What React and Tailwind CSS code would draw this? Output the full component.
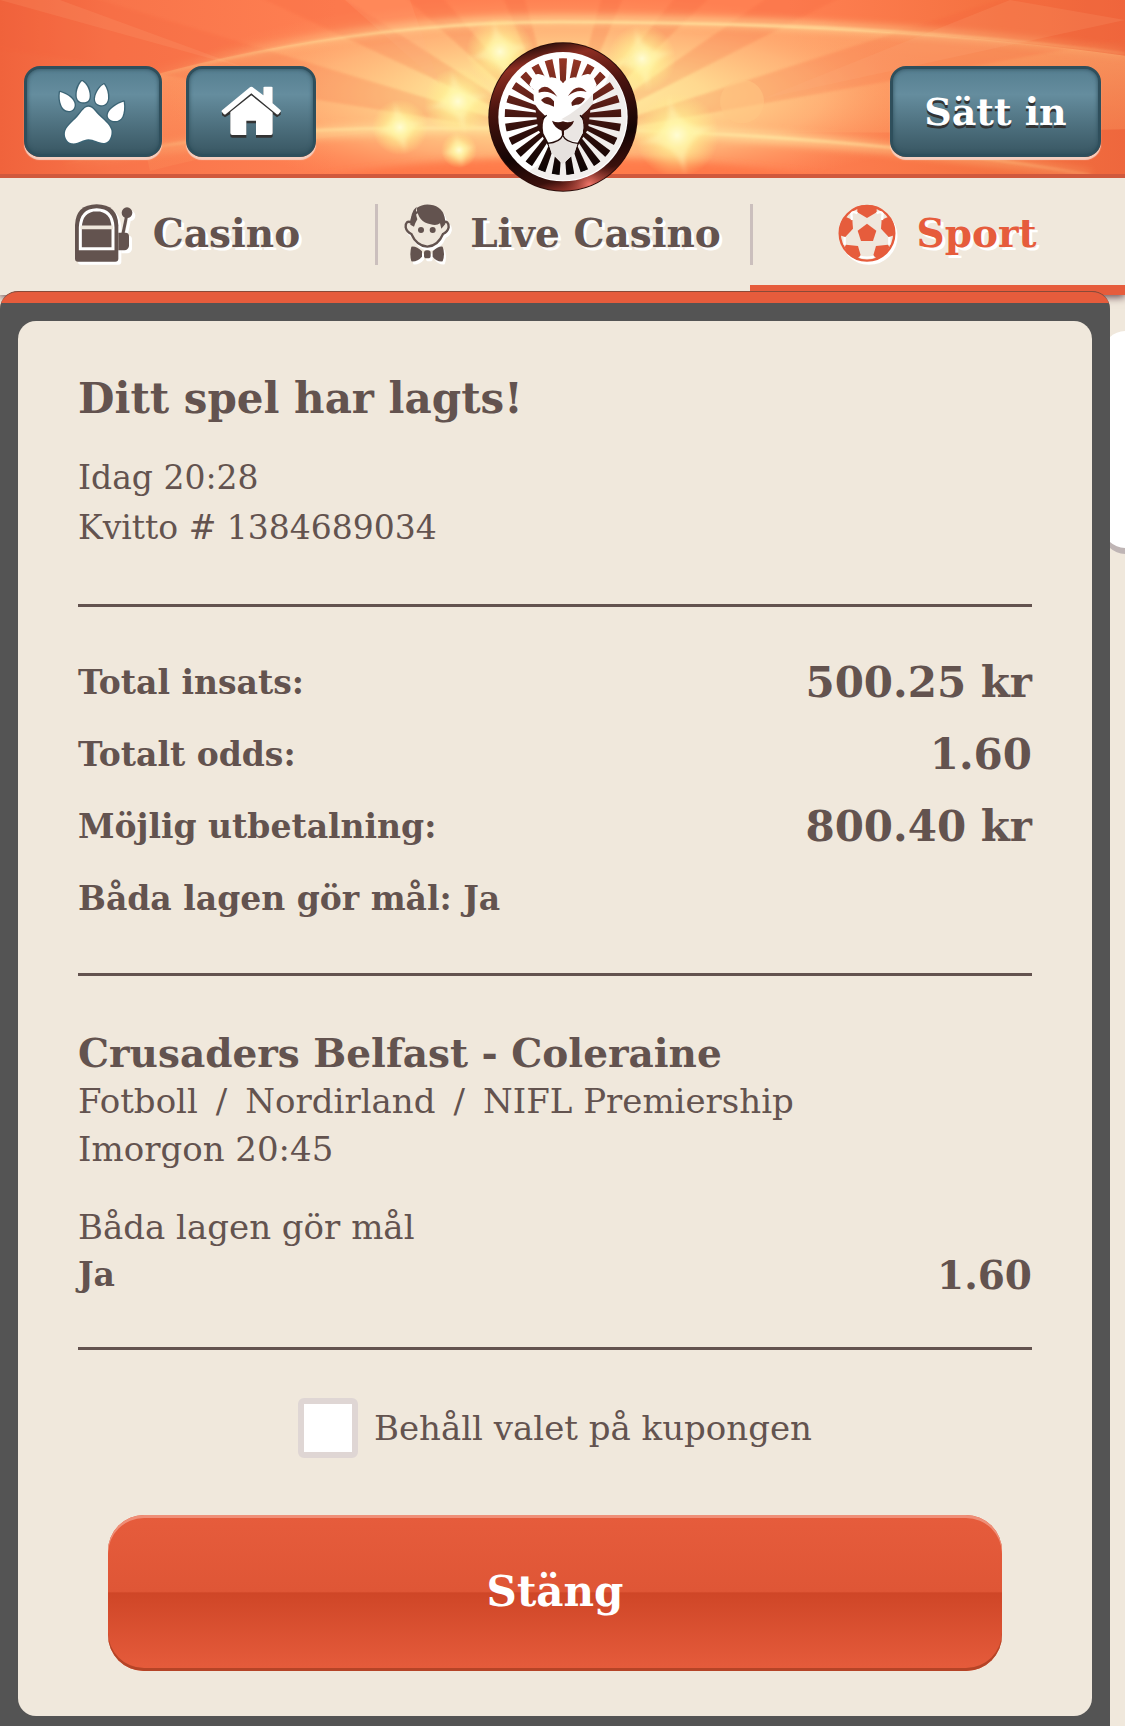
import React, { useState } from 'react';

const TOTALS = [
  { label: 'Total insats:', value: '500.25 kr' },
  { label: 'Totalt odds:', value: '1.60' },
  { label: 'Möjlig utbetalning:', value: '800.40 kr' },
  { label: 'Båda lagen gör mål: Ja', value: '' },
];

const SPARKS = [[458, 102, 34], [642, 59, 34], [677, 136, 42], [500, 52, 34], [459, 151, 18], [400, 128, 28]];
const RAYS = [-77, -61, -44, -19, 19, 42, 59, 76];
const SPOKES = Array.from({ length: 25 }, (_, i) => i * 14.4);

function HeaderRays() {
  return (
    <svg className="absolute inset-0 h-full w-full" viewBox="0 0 1125 175" preserveAspectRatio="none" aria-hidden="true">
      <defs>
        <linearGradient id="base" x2="1">
          <stop offset="0" stopColor="#f0633c" />
          <stop offset=".1" stopColor="#f8744a" />
          <stop offset=".3" stopColor="#ff8052" />
          <stop offset=".7" stopColor="#ff8052" />
          <stop offset=".9" stopColor="#f4703f" />
          <stop offset="1" stopColor="#ee673d" />
        </linearGradient>
        <radialGradient id="glow">
          <stop offset="0" stopColor="#fff3a6" />
          <stop offset=".35" stopColor="#ffdc92" stopOpacity=".95" />
          <stop offset=".65" stopColor="#ffbc7e" stopOpacity=".75" />
          <stop offset="1" stopColor="#ff9760" stopOpacity="0" />
        </radialGradient>
        <radialGradient id="spark">
          <stop offset="0" stopColor="#fffde0" />
          <stop offset=".3" stopColor="#fff79a" stopOpacity=".8" />
          <stop offset="1" stopColor="#fff08a" stopOpacity="0" />
        </radialGradient>
        <linearGradient id="arc" x2="1">
          <stop offset="0" stopColor="#ffe09a" stopOpacity="0" />
          <stop offset=".35" stopColor="#ffe6a0" />
          <stop offset=".7" stopColor="#ffe6a0" />
          <stop offset="1" stopColor="#ffc080" stopOpacity=".3" />
        </linearGradient>
        <linearGradient id="dome" x2="0" y2="1">
          <stop offset="0" stopColor="#ffc080" stopOpacity=".6" />
          <stop offset="1" stopColor="#ffa468" stopOpacity=".15" />
        </linearGradient>
        <filter id="soft" x="-10%" y="-50%" width="120%" height="200%"><feGaussianBlur stdDeviation="4" /></filter>
        <filter id="thin" x="-10%" y="-50%" width="120%" height="200%"><feGaussianBlur stdDeviation="1" /></filter>
        <filter id="haze" x="-30%" y="-30%" width="160%" height="160%"><feGaussianBlur stdDeviation="2" /></filter>
      </defs>
      <rect width="1125" height="175" fill="url(#base)" />
      <path d="M130 82Q340 22 560 22Q880 22 1125 56V130Q800 138 560 126Q330 124 150 172Z" fill="url(#dome)" />
      <ellipse cx="565" cy="96" rx="400" ry="100" fill="url(#glow)" />
      {RAYS.map((angle) => (
        <path key={angle} d="M563 140L500 -800H626Z" transform={`rotate(${angle} 563 140)`} fill="#f4603a" opacity=".2" filter="url(#thin)" />
      ))}
      <path d="M345 0L440 85L410 0ZM0 0L250 70L60 0ZM1125 20L760 100L1010 0Z" fill="#ffb888" opacity=".15" />
      <g fill="none" stroke="url(#arc)">
        <path d="M120 85Q340 20 560 20Q880 20 1125 54" strokeWidth="10" opacity=".5" filter="url(#soft)" />
        <path d="M120 86Q340 22 560 22Q880 22 1125 54" strokeWidth="3" opacity=".7" filter="url(#thin)" />
        <path d="M60 166Q260 126 560 126Q860 138 1090 176" strokeWidth="12" opacity=".6" filter="url(#soft)" />
        <path d="M60 166Q220 129 400 129H560Q860 135 1090 176" strokeWidth="3" opacity=".7" filter="url(#thin)" />
      </g>
      <path d="M300 182Q560 134 850 182Z" fill="#ff7444" opacity=".8" filter="url(#soft)" />
      <circle cx="742" cy="102" r="22" fill="#ffc784" opacity=".5" />
      {SPARKS.map(([x, y, r]) => (
        <g key={x} transform={`translate(${x} ${y})`}>
          <circle r={r} fill="url(#spark)" />
          <path d={`M0 ${-r}Q1 -1 ${r} 0Q1 1 0 ${r}Q-1 1 ${-r} 0Q-1 -1 0 ${-r}Z`} fill="#fffbc0" opacity=".4" transform="rotate(-12)" filter="url(#haze)" />
        </g>
      ))}
    </svg>
  );
}

function LionLogo() {
  return (
    <svg className="h-[150px] w-[150px]" viewBox="24 38 450 450" aria-hidden="true">
      <defs>
        <linearGradient id="rim" x1=".35" y1="0" x2=".6" y2="1">
          <stop offset="0" stopColor="#250d0a" />
          <stop offset=".12" stopColor="#8d2e22" />
          <stop offset=".35" stopColor="#4b140f" />
          <stop offset=".7" stopColor="#140504" />
          <stop offset=".9" stopColor="#3a100c" />
          <stop offset="1" stopColor="#a63c31" />
        </linearGradient>
        <radialGradient id="rimShine" cx=".68" cy=".96" r=".2">
          <stop offset="0" stopColor="#f0766a" />
          <stop offset="1" stopColor="#7e2a20" stopOpacity="0" />
        </radialGradient>
        <linearGradient id="mane" gradientUnits="userSpaceOnUse" x1="249" y1="88" x2="249" y2="437">
          <stop offset="0" stopColor="#963625" />
          <stop offset=".3" stopColor="#67231a" />
          <stop offset=".6" stopColor="#33100c" />
          <stop offset="1" stopColor="#090303" />
        </linearGradient>
        <clipPath id="disc"><circle cx="249" cy="262" r="175" /></clipPath>
      </defs>
      <circle cx="249" cy="263" r="224" fill="#2a0c09" />
      <circle cx="249" cy="263" r="221" fill="url(#rim)" />
      <circle cx="249" cy="263" r="221" fill="url(#rimShine)" />
      <circle cx="249" cy="262" r="194" fill="#fff" />
      <path d="M390 132A192 192 0 0 1 148 425Q310 330 390 132Z" fill="#f1eeec" />
      <mask id="spokes">
        {SPOKES.map((angle) => (
          <path key={angle} d="M237 86H261L252 262H246Z" transform={`rotate(${angle} 249 262)`} fill="#fff" />
        ))}
        <path d="M166 185L166 235L174 300L208 355L248 400L290 355L324 300L332 235L332 185L249 150Z" fill="#fff" />
      </mask>
      <g clipPath="url(#disc)">
        <rect x="50" y="70" width="400" height="390" fill="url(#mane)" mask="url(#spokes)" />
      </g>
      <path d="M249 162Q240 146 215 144Q200 148 190 138L176 134Q166 132 158 144L148 166Q152 176 160 180L162 222Q176 244 196 260Q184 282 190 312L205 340L215 372L248 405L283 372L293 340L308 312Q314 282 302 260Q322 244 338 222L340 180Q348 176 350 166L340 144Q332 132 322 134L308 138Q298 148 283 144Q258 146 249 162Z" fill="#fff" />
      <path d="M338 195L340 222Q322 244 302 260Q314 282 308 312L292 334Q262 342 248 320L266 275L244 270Q300 240 338 195Z" fill="#eae6e3" />
      <path d="M205 342Q235 330 248 320Q262 334 293 342L283 372L248 405L215 372Z" fill="#e6e1de" />
      <g fill="url(#mane)">
        <path d="M176 182Q200 156 232 202Q204 180 176 190Z" />
        <path d="M183 212Q203 192 222 216L222 232L208 226Q192 224 183 212Z" />
        <path d="M264 200Q292 156 320 188Q292 178 264 200Z" />
        <path d="M274 220Q290 194 315 208Q306 226 288 226L276 230Z" />
        <path d="M216 274Q232 282 249 276Q266 282 282 274Q278 292 252 304L252 318H246L245 304Q222 294 216 274Z" />
      </g>
      <path d="M202 342Q240 340 248 318Q258 340 294 342M200 258L188 268M300 258L310 268" fill="none" stroke="#210a08" strokeWidth="4" />
    </svg>
  );
}

function PawIcon() {
  return (
    <svg className="h-16 w-[72px]" viewBox="0 0 216 192" aria-hidden="true">
      <g fill="#fff" stroke="#3b6475" strokeWidth="8" paintOrder="stroke" strokeLinejoin="round">
        <path d="M75 3C86 10 98 26 98 48C98 62 90 67 79 67C68 67 60 61 59 48C58 30 66 12 75 3Z" />
        <path d="M141 13C150 26 154 40 153 56C151 70 143 76 132 76C120 75 113 67 114 55C116 38 128 20 141 13Z" />
        <path d="M9 36C28 42 46 52 52 68C56 82 48 92 38 93C26 94 17 86 13 76C8 64 7 50 9 36Z" />
        <path d="M200 65C203 82 201 98 196 110C190 121 178 126 166 122C155 118 149 110 154 98C160 84 182 70 200 65Z" />
        <path d="M94 80C107 80 112 92 124 104C138 118 158 132 163 150C166 166 158 188 142 189C124 190 112 178 94 178C78 178 66 192 44 190C28 186 20 168 25 152C32 134 54 120 66 104C76 92 82 81 94 80Z" />
      </g>
    </svg>
  );
}

function HomeIcon() {
  return (
    <svg className="h-[52px] w-[60px]" viewBox="0 0 180 156" aria-hidden="true">
      <path d="M91 6L3 78V88L12 94L28 84V150Q28 155 34 155H76V112H105V155H150Q155 155 155 150V84L168 94L179 86V78L155 57V6H127V30Z" fill="#333" />
      <path d="M91 22L28 74V141Q28 147 34 147H76V104H105V147H150Q155 147 155 141V74Z" fill="#fff" />
      <path d="M11 86L91 22L170 86" fill="none" stroke="#333" strokeWidth="9" />
      <path d="M91 2Q94 2 98 6L127 28V6Q127 2 131 2H151Q155 2 155 6V52L178 72Q181 75 178 78L173 84Q170 87 166 84L91 22L15 84Q12 87 8 84L3 78Q0 75 4 72L84 6Q88 2 91 2Z" fill="#fff" />
    </svg>
  );
}

function SlotIcon() {
  return (
    <svg className="h-[60px] w-[60px] [filter:drop-shadow(3px_3px_0_#fff)]" viewBox="0 0 180 180" aria-hidden="true">
      <path d="M0 64Q2 2 65 1Q128 2 130 64V164Q130 173 121 173H9Q0 173 0 164Z" fill="#63534f" />
      <path d="M16 134V70Q18 18 65 17Q112 18 114 70V134Z" fill="#63534f" stroke="#fff" strokeWidth="9" />
      <path d="M16 70H114" stroke="#efe7dc" strokeWidth="11" />
      <path d="M130 86H152Q162 86 162 98V126Q160 138 148 139H130Z" fill="#63534f" />
      <path d="M144 88L156 30" stroke="#63534f" strokeWidth="9" />
      <circle cx="156" cy="26" r="16" fill="#63534f" />
    </svg>
  );
}

function DealerIcon() {
  return (
    <svg className="h-[60px] w-[48px] [filter:drop-shadow(2px_3px_0_#fff)]" viewBox="0 0 144 180" aria-hidden="true">
      <path d="M22 55Q4 48 5 70Q8 84 22 90Q38 126 70 128Q102 126 117 90Q131 84 134 70Q134 48 117 55Q115 20 70 16Q24 20 22 55Z" fill="#efe7dc" stroke="#63534f" strokeWidth="7" />
      <path d="M38 8Q20 22 19 62L30 68Q34 56 40 46Q33 26 38 8Z" fill="#63534f" />
      <path d="M38 12Q60 -4 88 4Q124 14 124 60L112 74L108 58Q98 66 80 61Q42 54 38 12Z" fill="#63534f" />
      <circle cx="51" cy="78" r="9" fill="#63534f" />
      <circle cx="86" cy="78" r="9" fill="#63534f" />
      <path d="M22 128Q38 126 54 142V158Q40 174 22 172Q16 150 22 128ZM116 128Q102 126 86 142V158Q98 174 116 172Q124 150 116 128Z" fill="#63534f" />
      <rect x="60" y="139" width="20" height="24" rx="8" fill="#63534f" />
    </svg>
  );
}

function BallIcon() {
  return (
    <svg className="h-[60px] w-[60px] [filter:drop-shadow(2px_3px_0_#fff)]" viewBox="0 0 180 180" aria-hidden="true">
      <circle cx="87" cy="88" r="82" fill="#efe7dc" stroke="#e65c3c" strokeWidth="7" />
      <g fill="#e65c3c">
        <path d="M87 59L115 80L105 111H69L59 80Z" />
        <path d="M58 8Q87 -2 116 8V25L87 42L58 25Z" />
        <path d="M6 62Q10 48 22 38L43 47L45 74L22 99L5 94Q2 78 6 62Z" />
        <path d="M168 62Q164 48 152 38L131 47L129 74L152 99L169 94Q172 78 168 62Z" />
        <path d="M24 122L60 126L68 154L56 166Q34 158 20 130Z" />
        <path d="M150 122L114 126L106 154L118 166Q140 158 154 130Z" />
      </g>
      <path d="M58 28Q44 20 40 30L42 48M116 28Q130 20 134 30L132 48M20 99V122M154 99V122M66 158Q87 164 108 158" fill="none" stroke="#fff" strokeWidth="7" />
    </svg>
  );
}

const TABS = [
  { id: 'casino', label: 'Casino', icon: SlotIcon },
  { id: 'live', label: 'Live Casino', icon: DealerIcon },
  { id: 'sport', label: 'Sport', icon: BallIcon },
];

const headerButton = 'flex h-[91px] items-center justify-center rounded-2xl border-[3px] border-[#2f4f5c] bg-linear-to-b from-[#567f91] via-[#658d9e] via-30% to-[#395763] shadow-[0_3px_1px_#f6cfc0,inset_0_0_4px_#2f4f5c]';

function Rule({ className = '' }) {
  return <hr className={`border-0 h-[3px] bg-[#63534f] ${className}`} />;
}

export default function App() {
  const [activeTab, setActiveTab] = useState('sport');
  const [keep, setKeep] = useState(false);

  return (
    <div className="flex min-h-screen flex-col bg-[#f0e8dc] text-[#63534f] font-['DejaVu_Serif',serif]">
      <header className="relative z-20 h-[178px] border-b-4 border-[#d0593d]">
        <HeaderRays />
        <div className="relative flex items-center justify-between px-6 pt-[66px]">
          <div className="flex gap-6">
            <button className={`${headerButton} w-[138px]`} aria-label="Meny"><PawIcon /></button>
            <button className={`${headerButton} w-[130px]`} aria-label="Hem"><HomeIcon /></button>
          </div>
          <button className={`${headerButton} w-[211px] text-[38px] font-bold text-white [text-shadow:0_3px_0_#333]`}>Sätt in</button>
        </div>
        <a href="#start" aria-label="Start" className="absolute left-1/2 top-[42px] -translate-x-1/2"><LionLogo /></a>
      </header>

      <nav className="grid h-[117px] grid-cols-3 bg-[#f0e8dc] shadow-[0_2px_8px_#63434a]">
        {TABS.map(({ id, label, icon: Icon }, i) => (
          <a
            key={id}
            href={`#${id}`}
            onClick={() => setActiveTab(id)}
            className={`relative flex items-center justify-center gap-[18px] border-b-[10px] pt-1 text-[39px] font-bold whitespace-nowrap [text-shadow:3px_3px_0_#fff] ${activeTab === id ? 'border-[#e65c3c] text-[#e65c3c]' : 'border-transparent'}`}
          >
            <Icon />
            {label}
            {i < TABS.length - 1 && <span className="absolute right-[-3px] top-[26px] h-[61px] w-[3px] bg-[#cbbfbd]" />}
          </a>
        ))}
      </nav>

      <div className="relative z-10 -mt-1 flex flex-1">
        <main className="flex flex-1 flex-col overflow-hidden rounded-t-[18px] border-t border-[#8a4a38] bg-[#545454]">
          <div className="h-[11px] bg-[#e65c3c]" />
          <section className="mx-[18px] mt-[18px] mb-[10px] flex-1 rounded-[18px] bg-[#f0e8dc] px-[60px] pt-12 pb-11">
            <h1 className="text-[42px] leading-[60px] font-bold">Ditt spel har lagts!</h1>
            <div className="mt-6 text-[33px] leading-[50px]">
              <p>Idag 20:28</p>
              <p>Kvitto # 1384689034</p>
            </div>

            <Rule className="mt-[51px]" />

            <dl className="mt-10 mb-[38px] font-bold">
              {TOTALS.map(({ label, value }) => (
                <div key={label} className="flex items-center justify-between leading-[72px]">
                  <dt className="text-[33px]">{label}</dt>
                  <dd className="text-[42px]">{value}</dd>
                </div>
              ))}
            </dl>

            <Rule />

            <div className="mt-[53px] text-[34px] leading-[48px]">
              <h2 className="text-[39px] font-bold">Crusaders Belfast - Coleraine</h2>
              <p className="flex gap-[18px]">
                <span>Fotboll</span>
                <span>/</span>
                <span>Nordirland</span>
                <span>/</span>
                <span>NIFL Premiership</span>
              </p>
              <p>Imorgon 20:45</p>
              <p className="mt-[30px]">Båda lagen gör mål</p>
              <div className="flex items-center justify-between font-bold">
                <span className="text-[33px]">Ja</span>
                <span className="text-[39px]">1.60</span>
              </div>
            </div>

            <Rule className="mt-[48px]" />

            <label className="mt-12 flex items-center justify-center gap-4 text-[34px]">
              <input
                type="checkbox"
                checked={keep}
                onChange={(e) => setKeep(e.target.checked)}
                className="h-[60px] w-[60px] appearance-none rounded-md border-[6px] border-[#dfd6d4] bg-white checked:bg-[#e65c3c]"
              />
              Behåll valet på kupongen
            </label>

            <div className="mt-[57px] px-[30px]">
              <button className="h-[156px] w-full rounded-[36px] bg-[linear-gradient(#e65c3c,#df5636_49%,#cf4627_50%,#e65c3c)] pb-1 text-[42px] font-bold text-white shadow-[inset_0_3px_0_#ef8f78,inset_0_-3px_0_#b54427]">
                Stäng
              </button>
            </div>
          </section>
        </main>
        <aside className="w-[15px] overflow-hidden pt-10">
          <div className="h-[217px] w-[200px] -ml-2 rounded-3xl bg-white shadow-[0_6px_0_#bfb5b5]" />
        </aside>
      </div>
    </div>
  );
}
